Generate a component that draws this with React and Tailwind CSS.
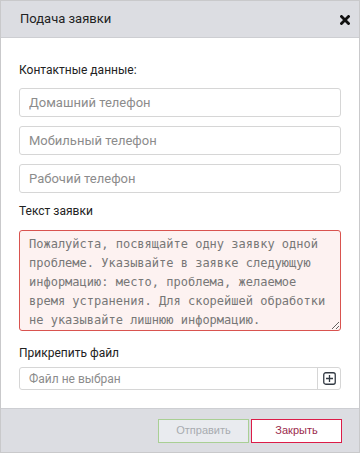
export default function App() {
  const inputCls =
    "block w-full h-[29px] border border-[#d6d6d6] rounded-[3px] px-[9px] text-[13px] text-[#333] placeholder:text-[#8c8c8c] outline-none bg-white font-['Roboto',sans-serif]";
  return (
    <div className="w-[360px] h-[453px] border border-[#c9c9cb] flex flex-col bg-white font-['Roboto',sans-serif] overflow-hidden">
      <div className="h-[37px] shrink-0 bg-[#dcdde2] border-b border-[#cdced2] flex items-center justify-between pl-[19px] pr-[9px]">
        <span className="text-[13px] text-[#222]">Подача заявки</span>
        <svg width="10" height="10" viewBox="0 0 10 10" className="mt-[1px]">
          <path d="M1.5 1.5 L8.5 8.5 M8.5 1.5 L1.5 8.5" stroke="#111" strokeWidth="2.8" strokeLinecap="square" />
        </svg>
      </div>
      <div className="flex-1 px-[18px] pt-[25px]">
        <div className="text-[12px] leading-[14px] text-[#222] mb-[11px]">Контактные данные:</div>
        <input className={inputCls + " mb-[9px]"} placeholder="Домашний телефон" />
        <input className={inputCls + " mb-[9px]"} placeholder="Мобильный телефон" />
        <input className={inputCls} placeholder="Рабочий телефон" />
        <div className="text-[12px] leading-[14px] text-[#222] mt-[11px] mb-[12px]">Текст заявки</div>
        <textarea
          className="block w-full h-[101px] border border-[#d9534f] rounded-[3px] bg-[#fdf2f1] px-[9px] pt-[4px] text-[12px] leading-[19px] font-['DejaVu_Sans_Mono',monospace] placeholder:text-[#777] outline-none"
          placeholder={"Пожалуйста, посвящайте одну заявку одной\nпроблеме. Указывайте в заявке следующую\nинформацию: место, проблема, желаемое\nвремя устранения. Для скорейшей обработки\nне указывайте лишнюю информацию."}
        />
        <div className="text-[12px] leading-[14px] text-[#222] mt-[15px] mb-[7px]">Прикрепить файл</div>
        <div className="flex h-[23px] border border-[#d6d6d6] rounded-[3px]">
          <div className="flex-1 flex items-center px-[9px] text-[12px] text-[#8c8c8c]">Файл не выбран</div>
          <div className="w-[23px] border-l border-[#d6d6d6] flex items-center justify-center">
            <svg width="13" height="13" viewBox="0 0 13 13">
              <rect x="0.75" y="0.75" width="11.5" height="11.5" rx="2" fill="none" stroke="#333a44" strokeWidth="1.3" />
              <path d="M6.5 3 V10 M3 6.5 H10" stroke="#333a44" strokeWidth="1.3" />
            </svg>
          </div>
        </div>
      </div>
      <div className="h-[44px] shrink-0 bg-[#dcdde2] border-t border-[#cdced2] flex items-center justify-end gap-[2px] pr-[17px]">
        <button className="w-[91px] h-[24px] border border-[#a9cf94] bg-[#e9ebef] text-[11px] text-[#a8acb0] font-['Liberation_Sans',sans-serif]">Отправить</button>
        <button className="w-[91px] h-[24px] border border-[#dc1c48] bg-white text-[11px] text-[#9b2b4c] font-['Liberation_Sans',sans-serif]">Закрыть</button>
      </div>
    </div>
  );
}
